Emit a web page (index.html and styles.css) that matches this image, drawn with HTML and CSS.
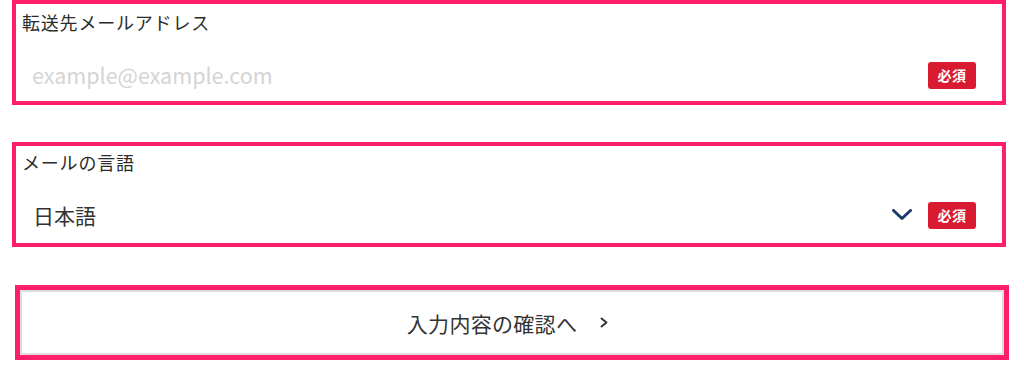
FILE: index.html
```html
<!DOCTYPE html>
<html lang="ja">
<head>
<meta charset="utf-8">
<link rel="stylesheet" href="styles.css">
</head>
<body>
<div class="page">
  <div class="field field-first">
    <div class="label">転送先メールアドレス</div>
    <div class="row">
      <span class="value placeholder">example@example.com</span>
      <span class="badge">必須</span>
    </div>
  </div>
  <div class="field field-second">
    <div class="label">メールの言語</div>
    <div class="row">
      <span class="value">日本語</span>
      <svg class="select-chevron" width="20" height="12" viewBox="0 0 20 12"><path d="M1.5 1.5 L10 9.5 L18.5 1.5" fill="none" stroke="#1d3a6a" stroke-width="3" stroke-linecap="round" stroke-linejoin="round"/></svg>
      <span class="badge">必須</span>
    </div>
  </div>
  <div class="submit-wrap">
    <div class="submit">
      <span class="submit-text">入力内容の確認へ</span>
      <svg class="submit-chevron" width="10" height="11" viewBox="0 0 10 11"><path d="M2.5 1.5 L7.5 5.5 L2.5 9.5" fill="none" stroke="#333" stroke-width="2" stroke-linecap="round" stroke-linejoin="round"/></svg>
    </div>
  </div>
</div>
</body>
</html>
```

FILE: styles.css
```css
html, body {
  margin: 0;
  padding: 0;
  background: #ffffff;
}
body {
  font-family: "Noto Sans CJK JP", "Noto Sans", sans-serif;
  color: #333333;
}
.page {
  width: 1024px;
  height: 376px;
  overflow: hidden;
}
.field {
  box-sizing: border-box;
  margin: 0 18px 0 12px;
  height: 105px;
  border: 4px solid #fe1f68;
  padding: 4px 26px 0 6px;
  display: flex;
  flex-direction: column;
}
.field-second {
  margin-top: 37px;
}
.label {
  font-size: 18px;
  line-height: 27px;
  letter-spacing: 0.8px;
  color: #2b2b2b;
}
.field-first .label {
  padding-top: 1px;
}
.field-second .label {
  margin-top: -1px;
}
.row {
  margin-top: 19px;
  height: 40px;
  display: flex;
  align-items: center;
}
.value {
  flex: 1;
  padding-left: 11px;
  font-size: 21px;
  line-height: 40px;
  color: #333333;
}
.placeholder {
  padding-left: 10px;
  font-size: 21.5px;
  color: #d4d4d4;
}
.select-chevron {
  margin-right: 16px;
  display: block;
}
.badge {
  width: 48px;
  height: 27px;
  border-radius: 3px;
  background: #d81b31;
  color: #ffffff;
  font-size: 14px;
  font-weight: 700;
  display: flex;
  align-items: center;
  justify-content: center;
  letter-spacing: 0.5px;
}
.submit-wrap {
  box-sizing: border-box;
  margin: 38px 15px 0 15px;
  height: 75px;
  border: 5px solid #fe1f68;
}
.submit {
  box-sizing: border-box;
  height: 100%;
  border: 2px solid #dddddd;
  display: flex;
  align-items: center;
  justify-content: center;
  padding-right: 8px;
}
.submit-text {
  font-size: 21px;
  line-height: 30px;
  color: #333333;
  letter-spacing: 0.3px;
}
.submit-chevron {
  display: block;
  margin-left: 22px;
}
```
